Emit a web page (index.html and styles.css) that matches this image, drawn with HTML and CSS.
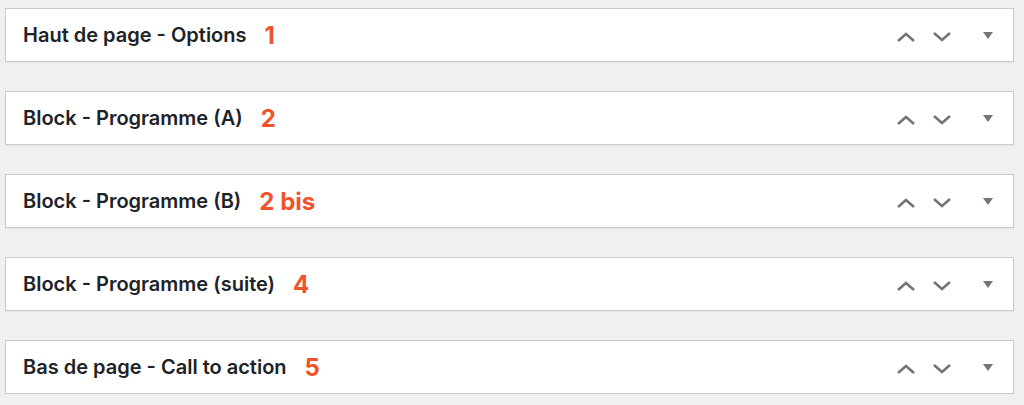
FILE: index.html
```html
<!DOCTYPE html>
<html lang="fr">
<head>
    <meta charset="UTF-8">
    <meta name="viewport" content="width=device-width, initial-scale=1.0">
    <title>Blocs</title>
    <link rel="stylesheet" href="styles.css">
</head>
<body>

    <div class="boxes">

        <!-- Haut de page -->
        <div class="postbox">
            <h2 class="hndle">Haut de page - Options <span class="num">1</span></h2>
            <div class="handle-actions">
                <button class="order up"><svg width="20" height="10" viewBox="0 0 20 10"><path d="M2 9 L10 2 L18 9" /></svg></button>
                <button class="order down"><svg width="20" height="10" viewBox="0 0 20 10"><path d="M2 1 L10 8 L18 1" /></svg></button>
                <button class="toggle"><svg width="10" height="7" viewBox="0 0 10 7"><polygon points="0,0 10,0 5,7" /></svg></button>
            </div>
        </div>

        <div class="postbox">
            <h2 class="hndle">Block - Programme (A) <span class="num">2</span></h2>
            <div class="handle-actions">
                <button class="order up"><svg width="20" height="10" viewBox="0 0 20 10"><path d="M2 9 L10 2 L18 9" /></svg></button>
                <button class="order down"><svg width="20" height="10" viewBox="0 0 20 10"><path d="M2 1 L10 8 L18 1" /></svg></button>
                <button class="toggle"><svg width="10" height="7" viewBox="0 0 10 7"><polygon points="0,0 10,0 5,7" /></svg></button>
            </div>
        </div>

        <div class="postbox">
            <h2 class="hndle">Block - Programme (B) <span class="num">2 bis</span></h2>
            <div class="handle-actions">
                <button class="order up"><svg width="20" height="10" viewBox="0 0 20 10"><path d="M2 9 L10 2 L18 9" /></svg></button>
                <button class="order down"><svg width="20" height="10" viewBox="0 0 20 10"><path d="M2 1 L10 8 L18 1" /></svg></button>
                <button class="toggle"><svg width="10" height="7" viewBox="0 0 10 7"><polygon points="0,0 10,0 5,7" /></svg></button>
            </div>
        </div>

        <div class="postbox">
            <h2 class="hndle">Block - Programme (suite) <span class="num">4</span></h2>
            <div class="handle-actions">
                <button class="order up"><svg width="20" height="10" viewBox="0 0 20 10"><path d="M2 9 L10 2 L18 9" /></svg></button>
                <button class="order down"><svg width="20" height="10" viewBox="0 0 20 10"><path d="M2 1 L10 8 L18 1" /></svg></button>
                <button class="toggle"><svg width="10" height="7" viewBox="0 0 10 7"><polygon points="0,0 10,0 5,7" /></svg></button>
            </div>
        </div>

        <!-- Bas de page -->
        <div class="postbox">
            <h2 class="hndle">Bas de page - Call to action <span class="num">5</span></h2>
            <div class="handle-actions">
                <button class="order up"><svg width="20" height="10" viewBox="0 0 20 10"><path d="M2 9 L10 2 L18 9" /></svg></button>
                <button class="order down"><svg width="20" height="10" viewBox="0 0 20 10"><path d="M2 1 L10 8 L18 1" /></svg></button>
                <button class="toggle"><svg width="10" height="7" viewBox="0 0 10 7"><polygon points="0,0 10,0 5,7" /></svg></button>
            </div>
        </div>

    </div>

</body>
</html>
```

FILE: styles.css
```css
/* Reset */
* {
    margin: 0;
    padding: 0;
    box-sizing: border-box;
}

body {
    background: #f0f0f1;
    font-family: Inter, "Open Sans", sans-serif;
    color: #1d2327;
    padding: 8px 0 0 5px;
}

/* Metabox list */
.boxes {
    width: 1009px;
    display: flex;
    flex-direction: column;
    gap: 29px;
}

.postbox {
    height: 54px;
    display: flex;
    align-items: center;
    justify-content: space-between;
    background: #fff;
    border: 1px solid #c9cacc;
    box-shadow: 0 1px 1px rgba(0, 0, 0, 0.04);
    padding-left: 17px;
    padding-right: 7px;
}

.hndle {
    font-size: 20px;
    font-weight: 600;
    display: flex;
    align-items: center;
}

.hndle .num {
    color: #f0522c;
    font-size: 24px;
    font-weight: 700;
    margin-left: 18px;
}

/* Handle buttons */
.handle-actions {
    display: flex;
    align-items: center;
}

.handle-actions button {
    background: none;
    border: none;
    width: 36px;
    height: 36px;
    display: flex;
    align-items: center;
    justify-content: center;
    cursor: pointer;
}

.handle-actions .order {
    padding-top: 4px;
}

.handle-actions .order svg path {
    fill: none;
    stroke: #72767b;
    stroke-width: 2.6;
}

.handle-actions .toggle {
    margin-left: 10px;
}

.handle-actions .toggle svg polygon {
    fill: #72767b;
}
```
